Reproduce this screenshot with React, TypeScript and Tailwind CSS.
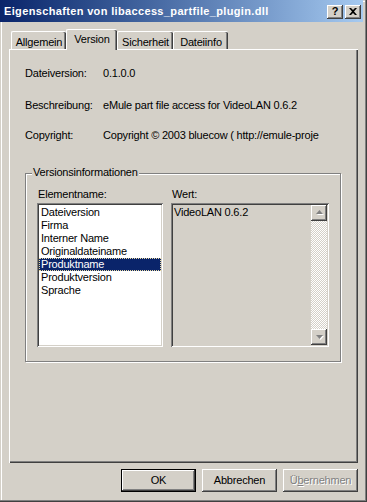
import React from 'react';

const raised =
    'shadow-[inset_-1px_-1px_0_#404040,inset_1px_1px_0_#ffffff,inset_-2px_-2px_0_#808080,inset_2px_2px_0_#d4d0c8]';
const sunken =
    'shadow-[inset_1px_1px_0_#808080,inset_-1px_-1px_0_#ffffff,inset_2px_2px_0_#404040,inset_-2px_-2px_0_#d4d0c8]';

const items = [
    'Dateiversion',
    'Firma',
    'Interner Name',
    'Originaldateiname',
    'Produktname',
    'Produktversion',
    'Sprache',
];

const CaptionButton: React.FC<{ children: React.ReactNode }> = ({ children }) => (
    <div className={`w-[16px] h-[14px] bg-[#d4d0c8] flex items-center justify-center ${raised}`}>
        {children}
    </div>
);

const Tab: React.FC<{ label: string; width: string; selected?: boolean }> = ({ label, width, selected }) => (
    <div
        className={`${width} flex justify-center rounded-t-[2px] border-l border-t border-white bg-[#d4d0c8] shadow-[inset_-1px_0_0_#404040,inset_-2px_0_0_#808080] ${
            selected ? 'h-[21px] -mb-px relative z-10 pt-[3px]' : 'h-[18px] pt-[4px]'
        }`}
    >
        <span className="leading-[13px]">{label}</span>
    </div>
);

const Arrow: React.FC<{ down?: boolean }> = ({ down }) => (
    <svg width="9" height="6" viewBox="0 0 9 6" className="block">
        {down ? (
            <>
                <path d="M2 2h7l-3.5 4z" fill="#ffffff" />
                <path d="M1 1h7l-3.5 4z" fill="#808080" />
            </>
        ) : (
            <>
                <path d="M2 5h7l-3.5-4z" fill="#ffffff" />
                <path d="M1 4h7L4.5 0z" fill="#808080" />
            </>
        )}
    </svg>
);

const Button: React.FC<{ children: React.ReactNode; primary?: boolean; disabled?: boolean }> = ({
    children,
    primary,
    disabled,
}) => (
    <div
        className={`w-[75px] h-[23px] flex items-center justify-center bg-[#d4d0c8] ${
            primary
                ? 'border border-black shadow-[inset_-1px_-1px_0_#404040,inset_1px_1px_0_#ffffff,inset_-2px_-2px_0_#808080]'
                : raised
        } ${disabled ? 'text-[#808080] [text-shadow:1px_1px_0_#ffffff]' : ''}`}
    >
        {children}
    </div>
);

export default function App() {
    return (
        <div className="w-[367px] h-[502px] bg-[#d4d0c8] flex flex-col font-['Liberation_Sans',Arial,sans-serif] text-[11px] leading-[13px] tracking-[-0.2px] text-black shadow-[inset_-1px_-1px_0_#404040,inset_-2px_-2px_0_#808080,inset_1px_1px_0_#d4d0c8,inset_2px_2px_0_#ffffff]">
            {/* title bar */}
            <div className="h-[22px] mr-[4px] flex items-center pl-[4px] pr-[2px] pt-[1px] bg-gradient-to-r from-[#0a246a] to-[#a6caf0]">
                <span className="font-bold text-white tracking-[0.35px]">Eigenschaften von libaccess_partfile_plugin.dll</span>
                <div className="ml-auto flex gap-[2px]">
                    <CaptionButton>
                        <span className="font-bold text-[11px] leading-none tracking-normal">?</span>
                    </CaptionButton>
                    <CaptionButton>
                        <svg width="8" height="7" viewBox="0 0 8 7" className="block">
                            <path d="M0 0h2l2 2 2-2h2L5 3.5 8 7H6L4 5 2 7H0l3-3.5z" fill="#000" />
                        </svg>
                    </CaptionButton>
                </div>
            </div>

            {/* tabs */}
            <div className="h-[27px] pl-[11px] flex items-end">
                <Tab label="Allgemein" width="w-[55px]" />
                <Tab label="Version" width="w-[51px]" selected />
                <Tab label="Sicherheit" width="w-[56px]" />
                <Tab label="Dateiinfo" width="w-[55px]" />
            </div>

            {/* panel */}
            <div className="ml-[9px] w-[349px] h-[414px] border-t border-l border-white shadow-[inset_-1px_-1px_0_#404040,inset_-2px_-2px_0_#808080] pl-[15px] pt-[17px]">
                <div className="flex">
                    <span className="w-[78px]">Dateiversion:</span>
                    <span>0.1.0.0</span>
                </div>
                <div className="flex mt-[19px]">
                    <span className="w-[78px]">Beschreibung:</span>
                    <span>eMule part file access for VideoLAN 0.6.2</span>
                </div>
                <div className="flex mt-[17px]">
                    <span className="w-[78px]">Copyright:</span>
                    <span>Copyright © 2003 bluecow ( http://emule-proje</span>
                </div>

                {/* group box */}
                <div className="mt-[31px] w-[316px] h-[189px] border border-[#808080] shadow-[inset_1px_1px_0_#ffffff,1px_1px_0_#ffffff]">
                    <div className="-mt-[8px] ml-[6px] px-[1px] w-fit bg-[#d4d0c8]">Versionsinformationen</div>
                    <div className="flex ml-[11px] mt-[9px] gap-[8px]">
                        <div className="flex flex-col">
                            <span className="pl-[1px]">Elementname:</span>
                            <div className={`mt-[2px] w-[126px] h-[144px] bg-white p-[2px] pt-[3px] ${sunken}`}>
                                {items.map((it) =>
                                    it === 'Produktname' ? (
                                        <div
                                            key={it}
                                            className="h-[13px] pl-[1px] bg-[#0a246a] text-white border border-dotted border-[#e8d9a0] leading-[11px]"
                                        >
                                            {it}
                                        </div>
                                    ) : (
                                        <div key={it} className="h-[13px] pl-[2px]">
                                            {it}
                                        </div>
                                    )
                                )}
                            </div>
                        </div>
                        <div className="flex flex-col">
                            <span className="pl-[1px]">Wert:</span>
                            <div className={`mt-[2px] w-[158px] h-[144px] p-[2px] flex ${sunken}`}>
                                <div className="flex-1 pt-[1px] pl-[1px]">VideoLAN 0.6.2</div>
                                <div className="w-[16px] flex flex-col">
                                    <div className={`h-[16px] flex items-center justify-center bg-[#d4d0c8] ${raised}`}>
                                        <Arrow />
                                    </div>
                                    <div className="flex-1 bg-[repeating-conic-gradient(#d4d0c8_0%_25%,#ffffff_0%_50%)] bg-[length:2px_2px]" />
                                    <div className={`h-[16px] flex items-center justify-center bg-[#d4d0c8] ${raised}`}>
                                        <Arrow down />
                                    </div>
                                </div>
                            </div>
                        </div>
                    </div>
                </div>
            </div>

            {/* buttons */}
            <div className="mt-[6px] pr-[9px] flex justify-end gap-[6px]">
                <Button primary>OK</Button>
                <Button>Abbrechen</Button>
                <Button disabled>
                    <span>
                        Ü<span className="underline">b</span>ernehmen
                    </span>
                </Button>
            </div>
        </div>
    );
}
